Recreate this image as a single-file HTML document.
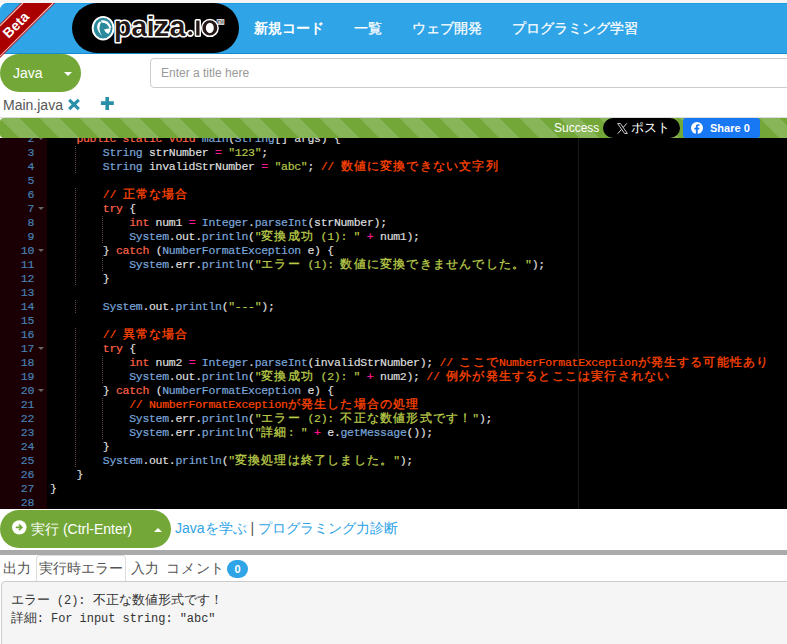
<!DOCTYPE html>
<html lang="ja"><head><meta charset="utf-8"><title>paiza.io</title>
<style>
html,body{margin:0;padding:0}
body{width:787px;height:644px;overflow:hidden;position:relative;background:#fff;font-family:"Liberation Sans",sans-serif;font-size:14px;color:#555}
.a{position:absolute}
#topstrip{left:0;top:0;width:787px;height:3px;background:#f5f5f5}
#hdr{left:0;top:3px;width:820px;height:49px;background:#2fa4e7;border-top:1px solid #1d9ce5;border-bottom:1px solid #178ad0;border-top-left-radius:7px}
#ribbon{left:0;top:0;width:90px;height:70px}
#logo{left:72px;top:3px;width:167px;height:50px;background:#000;border-radius:25px}
.nav{top:20px;color:#fff;-webkit-text-stroke:0.25px #fff;font-size:14px;line-height:16px;white-space:nowrap}
#java{left:0;top:54px;width:81px;height:38px;background:#73a839;border-radius:19px}
#java span{position:absolute;left:13px;top:11px;color:#fff;font-size:14px;line-height:16px}
.caret{position:absolute;width:0;height:0;border-left:4px solid transparent;border-right:4px solid transparent}
#title{left:150px;top:58px;width:700px;height:28px;border:1px solid #ccc;border-radius:4px;background:#fff}
#title span{position:absolute;left:10px;top:7px;color:#999;font-size:12px;line-height:14px}
#tabname{left:3px;top:97px;color:#555;font-size:14px;line-height:16px}
#tabline{left:0;top:117px;width:787px;height:1px;background:#ddd}
#bar{left:0;top:118px;width:820px;height:20px;background-color:#73a839;border-radius:4px 0 0 4px;
 background-image:linear-gradient(45deg,rgba(255,255,255,.15) 25%,transparent 25%,transparent 50%,rgba(255,255,255,.15) 50%,rgba(255,255,255,.15) 75%,transparent 75%,transparent);
 background-size:40px 40px}
#succ{left:554px;top:121px;color:#fff;font-size:12px;line-height:14px}
#xbtn{left:603px;top:118px;width:77px;height:20px;background:#000;border-radius:10px}
#fbbtn{left:683px;top:118px;width:77px;height:20px;background:#1877f2;border-radius:3px}
#editor{left:0;top:138px;width:787px;height:371px;background:#000;overflow:hidden}
#gutter{left:0;top:0;width:47px;height:371px;background:#1a0005}
#pm{left:578px;top:0;width:1px;height:371px;background:#1a1a1a}
.ln{position:absolute;left:0;width:34px;text-align:right;color:#4682b4;-webkit-text-stroke:0.2px currentColor;font-family:"Liberation Mono",monospace;font-size:11.5px;letter-spacing:-0.3px;line-height:14px}
.fold{position:absolute;left:38px;width:0;height:0;border-left:3px solid transparent;border-right:3px solid transparent;border-top:3px solid #666}
.ig{position:absolute;width:1px;height:14px;background:repeating-linear-gradient(to bottom,#5a4646 0,#5a4646 1px,transparent 1px,transparent 2px)}
.cl{position:absolute;white-space:pre;color:#dedede;-webkit-text-stroke:0.2px currentColor;font-family:"Liberation Mono",monospace;font-size:11.5px;letter-spacing:-0.3px;line-height:14px}
.cl i{display:inline-block;width:13.2px;font-style:normal;letter-spacing:0;text-align:left;-webkit-text-stroke:0.3px currentColor}
.k{color:#ff6347}.f{color:#7aa6da}.s{color:#b9ca4a}.c{color:#ff4500}.o{color:#ff1493}.t{color:#dedede}
#run{left:0;top:510px;width:171px;height:38px;background:#73a839;border-radius:19px}
#links{left:175px;top:520px;font-size:14px;line-height:16px;color:#555;white-space:nowrap}
#links a{color:#2fa4e7;text-decoration:none}
#gray{left:0;top:550px;width:787px;height:5px;background:#aaa}
.otab{top:560px;font-size:14px;line-height:16px;color:#555;white-space:nowrap}
#acttab{left:36px;top:555px;width:88px;height:26px;border:1px solid #ddd;border-bottom:none;border-radius:4px 4px 0 0;background:#fff}
#badge{left:227px;top:560px;width:21px;height:18px;border-radius:9px;background:#2fa4e7;color:#fff;font-size:11px;font-weight:bold;line-height:18px;text-align:center}
#outp{left:1px;top:581px;width:800px;height:100px;background:#f5f5f5;border:1px solid #ccc;border-radius:4px}
.ol{position:absolute;left:8.7px;letter-spacing:-0.05px;white-space:pre;color:#333;font-family:"Liberation Mono",monospace;font-size:12px;line-height:18.57px}
.ol b{display:inline-block;width:13px;font-weight:normal;font-size:13px}

</style></head><body>
<div class="a" id="topstrip"></div>
<div class="a" id="hdr"></div>
<div class="a" id="logo">
<svg width="167" height="50" viewBox="0 0 167 50" style="position:absolute;left:0;top:0">
 <g transform="translate(31.1 25.2)">
 <ellipse cx="0" cy="0" rx="10.4" ry="11.3" fill="#2b8a9b" stroke="#fff" stroke-width="1.9"/>
 <path d="M-3.4 -6.6 Q-9.6 -0.5 -0.8 7.9 Q-5.9 0.6 -2 -6.3 Z" fill="#fff"/>
 <path d="M-2.3 -7.8 Q5.4 -9.4 8.3 -0.6 L6.3 0 Q4 -5.6 -1.3 -5.4 Z" fill="#fff"/>
 <path d="M0.9 1.2 L7.6 -0.3 Q7.8 3.6 5.2 5.7 Q2.2 4.8 0.9 1.2 Z" fill="#fff"/>
 </g>
 <g font-family="Liberation Sans" font-weight="bold" font-size="28" fill="#231815" stroke="#fff" stroke-width="3.2" paint-order="stroke" stroke-linejoin="round">
 <text x="42" y="33">p</text><text x="59.5" y="33">a</text><text x="74.7" y="33">i</text><text x="81.8" y="33" transform="translate(81.8 0) scale(1.1 1) translate(-81.8 0)">z</text><text x="97.8" y="33">a</text>
 </g>
 <circle cx="118.3" cy="30.3" r="3.6" fill="#fff"/><circle cx="118.3" cy="30.3" r="2" fill="#231815"/>
 <rect x="122.6" y="16" width="6.4" height="18.1" rx="1.5" fill="#fff"/>
 <rect x="124.2" y="17.6" width="3.3" height="14.9" fill="#231815"/>
 <ellipse cx="137.85" cy="24.9" rx="9" ry="9.2" fill="#fff"/>
 <path d="M137.85 17.3 A7.5 7.6 0 1 1 137.85 32.5 A7.5 7.6 0 1 1 137.85 17.3 Z M137.85 19.65 A4 5.25 0 1 0 137.85 30.15 A4 5.25 0 1 0 137.85 19.65 Z" fill="#231815" fill-rule="evenodd"/>
 <text x="145.3" y="20.8" font-family="Liberation Sans" font-weight="bold" font-size="4.6" fill="#555" stroke="#fff" stroke-width="1.3" paint-order="stroke">TM</text>
</svg>
</div>
<svg class="a" id="ribbon" width="90" height="70" viewBox="0 0 90 70">
 <polygon points="21,3 55,3 0,58 0,24" fill="#a00"/>
 <line x1="22.9" y1="3" x2="0" y2="25.9" stroke="#f7c0c0" stroke-width="1.1"/>
 <line x1="53.2" y1="3" x2="0" y2="56.2" stroke="#f7c0c0" stroke-width="1.1"/>
 <text x="0" y="0" transform="translate(15.8 24.8) rotate(-45)" text-anchor="middle" dominant-baseline="central" font-family="Liberation Sans" font-weight="bold" font-size="14" fill="#fff">Beta</text>
</svg>
<div class="a nav" style="left:254px;font-weight:bold;-webkit-text-stroke:0">新規コード</div>
<div class="a nav" style="left:354px">一覧</div>
<div class="a nav" style="left:412px">ウェブ開発</div>
<div class="a nav" style="left:512px">プログラミング学習</div>

<div class="a" id="java"><span>Java</span><div class="caret" style="left:64px;top:18px;border-top:4px solid #fff"></div></div>
<div class="a" id="title"><span>Enter a title here</span></div>

<div class="a" id="tabname">Main.java</div>
<svg class="a" style="left:67px;top:97.5px" width="14" height="13" viewBox="0 0 14 13">
 <path d="M2.2 1.8 L11.8 11.2 M11.8 1.8 L2.2 11.2" stroke="#2a8fa8" stroke-width="3.2"/>
</svg>
<svg class="a" style="left:100px;top:96px" width="14" height="14" viewBox="0 0 14 14">
 <path d="M7.2 1 V13.9 M0.9 7.1 H13.8" stroke="#2a8fa8" stroke-width="3.6"/>
</svg>
<div class="a" id="tabline"></div>
<div class="a" id="bar"></div>
<div class="a" id="succ">Success</div>
<div class="a" id="xbtn">
 <svg style="position:absolute;left:14px;top:4.5px" width="11" height="11" viewBox="0 0 11 11"><path d="M0.6 0.5 H3.4 L10.4 10.5 H7.6 Z" fill="none" stroke="#ddd" stroke-width="0.9"/><path d="M9.8 0.4 L6.1 4.6 M4.6 6.3 L0.8 10.6" stroke="#ddd" stroke-width="1"/></svg>
 <span style="position:absolute;left:28px;top:2px;color:#fff;font-size:13px;line-height:15px;white-space:nowrap">ポスト</span>
</div>
<div class="a" id="fbbtn">
 <svg style="position:absolute;left:8px;top:4px" width="12" height="12" viewBox="0 0 24 24"><circle cx="12" cy="12" r="12" fill="#fff"/><path d="M13.4 24V15h3l.5-3.5h-3.5V9.3c0-1 .3-1.7 1.8-1.7h1.9V4.5c-.3 0-1.5-.1-2.8-.1-2.8 0-4.6 1.7-4.6 4.8v2.3H6.6V15h3.1v9z" fill="#1877f2"/></svg>
 <span style="position:absolute;left:27px;top:3px;color:#fff;font-size:11px;font-weight:bold;line-height:14px;white-space:nowrap">Share 0</span>
</div>

<div class="a" id="editor">
 <div class="a" id="gutter"></div>
 <div class="a" id="pm"></div>
 <div class="a" style="left:0;top:-138px;width:787px;height:644px">
<div class="ln" style="top:132.0px">2</div>
<div class="fold" style="top:137px"></div>
<div class="cl" style="left:76.4px;top:132.0px"><span class="k">public</span><span class="t"> </span><span class="k">static</span><span class="t"> </span><span class="k">void</span><span class="t"> </span><span class="f">main</span><span class="t">(</span><span class="f">String</span><span class="t">[</span><span class="t">]</span><span class="t"> </span><span class="t">args</span><span class="t">)</span><span class="t"> </span><span class="t">{</span></div>
<div class="ln" style="top:146.0px">3</div>
<div class="ig" style="left:75.4px;top:146px"></div>
<div class="cl" style="left:102.8px;top:146.0px"><span class="f">String</span><span class="t"> </span><span class="t">strNumber</span><span class="t"> </span><span class="o">=</span><span class="t"> </span><span class="s">&quot;123&quot;</span><span class="t">;</span></div>
<div class="ln" style="top:160.0px">4</div>
<div class="ig" style="left:75.4px;top:160px"></div>
<div class="cl" style="left:102.8px;top:160.0px"><span class="f">String</span><span class="t"> </span><span class="t">invalidStrNumber</span><span class="t"> </span><span class="o">=</span><span class="t"> </span><span class="s">&quot;abc&quot;</span><span class="t">;</span><span class="t"> </span><span class="c">// <i>数</i><i>値</i><i>に</i><i>変</i><i>換</i><i>で</i><i>き</i><i>な</i><i>い</i><i>文</i><i>字</i><i>列</i></span></div>
<div class="ln" style="top:174.0px">5</div>
<div class="ln" style="top:188.0px">6</div>
<div class="ig" style="left:75.4px;top:188px"></div>
<div class="cl" style="left:102.8px;top:188.0px"><span class="c">// <i>正</i><i>常</i><i>な</i><i>場</i><i>合</i></span></div>
<div class="ln" style="top:202.0px">7</div>
<div class="fold" style="top:207px"></div>
<div class="ig" style="left:75.4px;top:202px"></div>
<div class="cl" style="left:102.8px;top:202.0px"><span class="k">try</span><span class="t"> </span><span class="t">{</span></div>
<div class="ln" style="top:216.0px">8</div>
<div class="ig" style="left:75.4px;top:216px"></div>
<div class="ig" style="left:101.8px;top:216px"></div>
<div class="cl" style="left:129.2px;top:216.0px"><span class="k">int</span><span class="t"> </span><span class="t">num1</span><span class="t"> </span><span class="o">=</span><span class="t"> </span><span class="f">Integer</span><span class="t">.</span><span class="f">parseInt</span><span class="t">(</span><span class="t">strNumber</span><span class="t">)</span><span class="t">;</span></div>
<div class="ln" style="top:230.0px">9</div>
<div class="ig" style="left:75.4px;top:230px"></div>
<div class="ig" style="left:101.8px;top:230px"></div>
<div class="cl" style="left:129.2px;top:230.0px"><span class="f">System</span><span class="t">.</span><span class="t">out</span><span class="t">.</span><span class="f">println</span><span class="t">(</span><span class="s">&quot;<i>変</i><i>換</i><i>成</i><i>功</i> (1): &quot;</span><span class="t"> </span><span class="o">+</span><span class="t"> </span><span class="t">num1</span><span class="t">)</span><span class="t">;</span></div>
<div class="ln" style="top:244.0px">10</div>
<div class="fold" style="top:249px"></div>
<div class="ig" style="left:75.4px;top:244px"></div>
<div class="cl" style="left:102.8px;top:244.0px"><span class="t">}</span><span class="t"> </span><span class="k">catch</span><span class="t"> </span><span class="t">(</span><span class="f">NumberFormatException</span><span class="t"> </span><span class="t">e</span><span class="t">)</span><span class="t"> </span><span class="t">{</span></div>
<div class="ln" style="top:258.0px">11</div>
<div class="ig" style="left:75.4px;top:258px"></div>
<div class="ig" style="left:101.8px;top:258px"></div>
<div class="cl" style="left:129.2px;top:258.0px"><span class="f">System</span><span class="t">.</span><span class="t">err</span><span class="t">.</span><span class="f">println</span><span class="t">(</span><span class="s">&quot;<i>エ</i><i>ラ</i><i>ー</i> (1): <i>数</i><i>値</i><i>に</i><i>変</i><i>換</i><i>で</i><i>き</i><i>ま</i><i>せ</i><i>ん</i><i>で</i><i>し</i><i>た</i><i>。</i>&quot;</span><span class="t">)</span><span class="t">;</span></div>
<div class="ln" style="top:272.0px">12</div>
<div class="ig" style="left:75.4px;top:272px"></div>
<div class="cl" style="left:102.8px;top:272.0px"><span class="t">}</span></div>
<div class="ln" style="top:286.0px">13</div>
<div class="ln" style="top:300.0px">14</div>
<div class="ig" style="left:75.4px;top:300px"></div>
<div class="cl" style="left:102.8px;top:300.0px"><span class="f">System</span><span class="t">.</span><span class="t">out</span><span class="t">.</span><span class="f">println</span><span class="t">(</span><span class="s">&quot;---&quot;</span><span class="t">)</span><span class="t">;</span></div>
<div class="ln" style="top:314.0px">15</div>
<div class="ln" style="top:328.0px">16</div>
<div class="ig" style="left:75.4px;top:328px"></div>
<div class="cl" style="left:102.8px;top:328.0px"><span class="c">// <i>異</i><i>常</i><i>な</i><i>場</i><i>合</i></span></div>
<div class="ln" style="top:342.0px">17</div>
<div class="fold" style="top:347px"></div>
<div class="ig" style="left:75.4px;top:342px"></div>
<div class="cl" style="left:102.8px;top:342.0px"><span class="k">try</span><span class="t"> </span><span class="t">{</span></div>
<div class="ln" style="top:356.0px">18</div>
<div class="ig" style="left:75.4px;top:356px"></div>
<div class="ig" style="left:101.8px;top:356px"></div>
<div class="cl" style="left:129.2px;top:356.0px"><span class="k">int</span><span class="t"> </span><span class="t">num2</span><span class="t"> </span><span class="o">=</span><span class="t"> </span><span class="f">Integer</span><span class="t">.</span><span class="f">parseInt</span><span class="t">(</span><span class="t">invalidStrNumber</span><span class="t">)</span><span class="t">;</span><span class="t"> </span><span class="c">// <i>こ</i><i>こ</i><i>で</i>NumberFormatException<i>が</i><i>発</i><i>生</i><i>す</i><i>る</i><i>可</i><i>能</i><i>性</i><i>あ</i><i>り</i></span></div>
<div class="ln" style="top:370.0px">19</div>
<div class="ig" style="left:75.4px;top:370px"></div>
<div class="ig" style="left:101.8px;top:370px"></div>
<div class="cl" style="left:129.2px;top:370.0px"><span class="f">System</span><span class="t">.</span><span class="t">out</span><span class="t">.</span><span class="f">println</span><span class="t">(</span><span class="s">&quot;<i>変</i><i>換</i><i>成</i><i>功</i> (2): &quot;</span><span class="t"> </span><span class="o">+</span><span class="t"> </span><span class="t">num2</span><span class="t">)</span><span class="t">;</span><span class="t"> </span><span class="c">// <i>例</i><i>外</i><i>が</i><i>発</i><i>生</i><i>す</i><i>る</i><i>と</i><i>こ</i><i>こ</i><i>は</i><i>実</i><i>行</i><i>さ</i><i>れ</i><i>な</i><i>い</i></span></div>
<div class="ln" style="top:384.0px">20</div>
<div class="fold" style="top:389px"></div>
<div class="ig" style="left:75.4px;top:384px"></div>
<div class="cl" style="left:102.8px;top:384.0px"><span class="t">}</span><span class="t"> </span><span class="k">catch</span><span class="t"> </span><span class="t">(</span><span class="f">NumberFormatException</span><span class="t"> </span><span class="t">e</span><span class="t">)</span><span class="t"> </span><span class="t">{</span></div>
<div class="ln" style="top:398.0px">21</div>
<div class="ig" style="left:75.4px;top:398px"></div>
<div class="ig" style="left:101.8px;top:398px"></div>
<div class="cl" style="left:129.2px;top:398.0px"><span class="c">// NumberFormatException<i>が</i><i>発</i><i>生</i><i>し</i><i>た</i><i>場</i><i>合</i><i>の</i><i>処</i><i>理</i></span></div>
<div class="ln" style="top:412.0px">22</div>
<div class="ig" style="left:75.4px;top:412px"></div>
<div class="ig" style="left:101.8px;top:412px"></div>
<div class="cl" style="left:129.2px;top:412.0px"><span class="f">System</span><span class="t">.</span><span class="t">err</span><span class="t">.</span><span class="f">println</span><span class="t">(</span><span class="s">&quot;<i>エ</i><i>ラ</i><i>ー</i> (2): <i>不</i><i>正</i><i>な</i><i>数</i><i>値</i><i>形</i><i>式</i><i>で</i><i>す</i><i>！</i>&quot;</span><span class="t">)</span><span class="t">;</span></div>
<div class="ln" style="top:426.0px">23</div>
<div class="ig" style="left:75.4px;top:426px"></div>
<div class="ig" style="left:101.8px;top:426px"></div>
<div class="cl" style="left:129.2px;top:426.0px"><span class="f">System</span><span class="t">.</span><span class="t">err</span><span class="t">.</span><span class="f">println</span><span class="t">(</span><span class="s">&quot;<i>詳</i><i>細</i>: &quot;</span><span class="t"> </span><span class="o">+</span><span class="t"> </span><span class="t">e</span><span class="t">.</span><span class="f">getMessage</span><span class="t">(</span><span class="t">)</span><span class="t">)</span><span class="t">;</span></div>
<div class="ln" style="top:440.0px">24</div>
<div class="ig" style="left:75.4px;top:440px"></div>
<div class="cl" style="left:102.8px;top:440.0px"><span class="t">}</span></div>
<div class="ln" style="top:454.0px">25</div>
<div class="ig" style="left:75.4px;top:454px"></div>
<div class="cl" style="left:102.8px;top:454.0px"><span class="f">System</span><span class="t">.</span><span class="t">out</span><span class="t">.</span><span class="f">println</span><span class="t">(</span><span class="s">&quot;<i>変</i><i>換</i><i>処</i><i>理</i><i>は</i><i>終</i><i>了</i><i>し</i><i>ま</i><i>し</i><i>た</i><i>。</i>&quot;</span><span class="t">)</span><span class="t">;</span></div>
<div class="ln" style="top:468.0px">26</div>
<div class="cl" style="left:76.4px;top:468.0px"><span class="t">}</span></div>
<div class="ln" style="top:482.0px">27</div>
<div class="cl" style="left:50.0px;top:482.0px"><span class="t">}</span></div>
<div class="ln" style="top:496.0px">28</div>
 </div>
</div>

<div class="a" id="run">
 <svg style="position:absolute;left:12.2px;top:10px" width="15" height="15" viewBox="0 0 15 15"><circle cx="7.3" cy="7.4" r="7.2" fill="#fff"/><path d="M3.8 7.4 H9.2 M7 4.6 L9.8 7.4 L7 10.2" stroke="#73a839" stroke-width="1.7" fill="none"/></svg>
 <span style="position:absolute;left:31px;top:11px;color:#fff;font-size:14px;line-height:16px;white-space:nowrap">実行 (Ctrl-Enter)</span>
 <div class="caret" style="left:154px;top:18px;border-bottom:4px solid #fff"></div>
</div>
<div class="a" id="links"><a>Javaを学ぶ</a> | <a>プログラミング力診断</a></div>
<div class="a" id="gray"></div>
<div class="a" id="acttab"></div>
<div class="a otab" style="left:3px">出力</div>
<div class="a otab" style="left:39px">実行時エラー</div>
<div class="a otab" style="left:131px">入力</div>
<div class="a otab" style="left:166px;letter-spacing:0.8px">コメント</div>
<div class="a" id="badge">0</div>
<div class="a" id="outp">
 <div class="ol" style="top:9.5px"><b>エ</b><b>ラ</b><b>ー</b> (2): <b>不</b><b>正</b><b>な</b><b>数</b><b>値</b><b>形</b><b>式</b><b>で</b><b>す</b><b>！</b></div>
 <div class="ol" style="top:28.07px"><b>詳</b><b>細</b>: For input string: &quot;abc&quot;</div>
</div>

</body></html>
